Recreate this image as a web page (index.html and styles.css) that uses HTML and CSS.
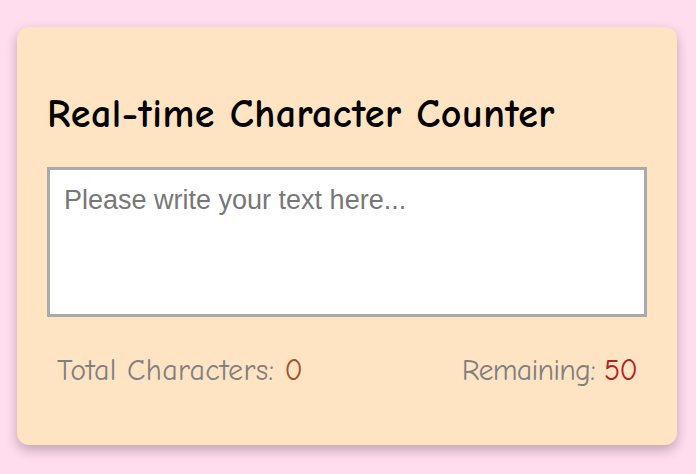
FILE: index.html
```html
<!DOCTYPE html>
<html>
<head>
<meta charset="utf-8">
<link rel="stylesheet" href="styles.css">
</head>
<body>
<div class="card">
  <h2 class="title">Real-time Character Counter</h2>
  <textarea class="input" placeholder="Please write your text here..."></textarea>
  <div class="stats">
    <span class="stat stat-total">Total Characters: <span class="total">0</span></span>
    <span class="stat stat-remaining">Remaining: <span class="remaining">50</span></span>
  </div>
</div>
</body>
</html>
```
FILE: styles.css
```css
html, body { margin: 0; padding: 0; }
body {
  background: #ffdcee;
  font-family: "Comic Sans MS", "Comic Neue", "Chalkboard SE", cursive;
  height: 474px;
}
.card {
  margin: 27px 0 0 17px;
  width: 660px;
  height: 418px;
  box-sizing: border-box;
  background: #ffe4c4;
  border-radius: 12px;
  box-shadow: 0 5px 12px rgba(0,0,0,0.25);
  padding: 30px;
}
.title {
  margin: 33px 0 29px;
  line-height: 48px;
  font-size: 40px;
  letter-spacing: 0.5px;
  font-weight: bold;
  color: #000;
}
.input {
  display: block;
  width: 100%;
  height: 150px;
  box-sizing: border-box;
  border: 3px solid #aaa;
  padding: 15px 14px 12px;
  font-family: "Liberation Sans", Arial, sans-serif;
  font-size: 27px;
  resize: none;
  background: #fff;
}
.input::placeholder { color: #777; }
.stats {
  display: flex;
  justify-content: space-between;
  padding: 36px 10px 0;
  font-size: 30px;
  color: #808080;
}
.stat-total { letter-spacing: 0.3px; }
.stat-remaining { letter-spacing: -0.8px; }
.total { color: #a0522d; }
.remaining { color: #b22222; }
```
